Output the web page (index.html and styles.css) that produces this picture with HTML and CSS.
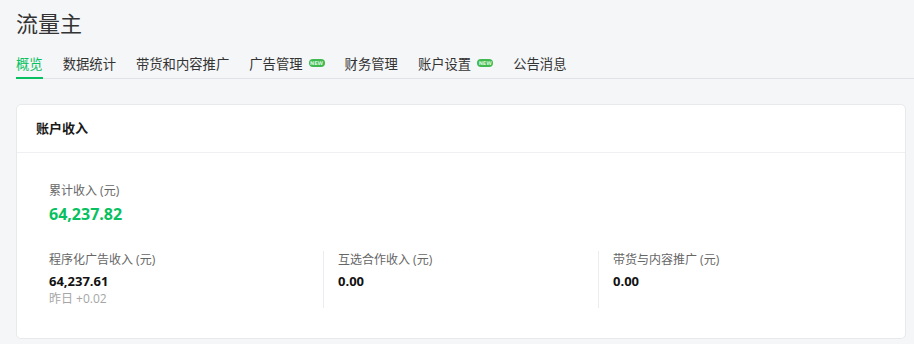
FILE: index.html
```html
<!DOCTYPE html>
<html lang="zh-CN">
<head>
    <meta charset="UTF-8">
    <meta name="viewport" content="width=device-width, initial-scale=1.0">
    <title>流量主</title>
    <link rel="stylesheet" href="styles.css">
</head>
<body>
<div class="page">
    <h1 class="page-title">流量主</h1>
    <nav class="tabs">
        <a class="tab active">概览</a>
        <a class="tab">数据统计</a>
        <a class="tab">带货和内容推广</a>
        <a class="tab">广告管理<span class="badge">NEW</span></a>
        <a class="tab">财务管理</a>
        <a class="tab">账户设置<span class="badge">NEW</span></a>
        <a class="tab">公告消息</a>
    </nav>

    <section class="card">
        <div class="card-header">账户收入</div>
        <div class="card-body">
            <div class="total">
                <div class="label">累计收入 (元)</div>
                <div class="total-value">64,237.82</div>
            </div>
            <div class="stats">
                <div class="stat">
                    <div class="label">程序化广告收入 (元)</div>
                    <div class="stat-value">64,237.61</div>
                    <div class="stat-note">昨日 +0.02</div>
                </div>
                <div class="stat">
                    <div class="label">互选合作收入 (元)</div>
                    <div class="stat-value">0.00</div>
                </div>
                <div class="stat">
                    <div class="label">带货与内容推广 (元)</div>
                    <div class="stat-value">0.00</div>
                </div>
            </div>
        </div>
    </section>
</div>
</body>
</html>
```

FILE: styles.css
```css
body {
    margin: 0;
    font-family: "Open Sans", "Noto Sans CJK SC", sans-serif;
    color: #333;
    background-color: #f5f6f8;
}
.page {
    padding-left: 16px;
}
.page-title {
    margin: 8px 0 0;
    font-size: 22px;
    line-height: 30px;
    font-weight: normal;
    color: #333;
}
.tabs {
    display: flex;
    gap: 20px;
    margin-top: 16px;
    border-bottom: 1px solid #e1e2e5;
}
.tab {
    display: flex;
    align-items: center;
    font-size: 13.33px;
    line-height: 20px;
    padding-bottom: 3px;
    margin-bottom: -1px;
    border-bottom: 2px solid transparent;
    color: #333;
    cursor: pointer;
}
.tab.active {
    color: #07c160;
    border-bottom-color: #07c160;
}
.badge {
    display: inline-block;
    width: 16px;
    height: 8px;
    margin: -3px 0 0 6px;
    border-radius: 4px;
    background-color: #3fb950;
    color: #d9f5dc;
    font-family: "DejaVu Sans", sans-serif;
    font-size: 5px;
    line-height: 8px;
    font-weight: bold;
    text-align: center;
}
.card {
    margin: 25px 8px 0 0;
    background-color: #fff;
    border: 1px solid #e8e9eb;
    border-radius: 5px;
}
.card-header {
    padding: 0 19px;
    font-size: 13px;
    font-weight: bold;
    line-height: 47px;
    color: #1a1a1a;
    border-bottom: 1px solid #f0f0f2;
}
.card-body {
    padding: 29px 32px 30px;
}
.label {
    font-size: 12px;
    line-height: 18px;
    color: #666;
}
.total-value {
    margin-top: 2px;
    font-size: 16px;
    line-height: 24px;
    font-weight: bold;
    color: #07c160;
}
.stats {
    display: grid;
    grid-template-columns: 274px 275px 275px;
    margin-top: 25px;
}
.stat {
    min-height: 57px;
}
.stat + .stat {
    padding-left: 14px;
    border-left: 1px solid #ececee;
}
.stat-value {
    margin-top: 3px;
    font-size: 13px;
    line-height: 18px;
    font-weight: bold;
    color: #111;
}
.stat-note {
    font-size: 12px;
    line-height: 18px;
    color: #a6a6a6;
}
```
